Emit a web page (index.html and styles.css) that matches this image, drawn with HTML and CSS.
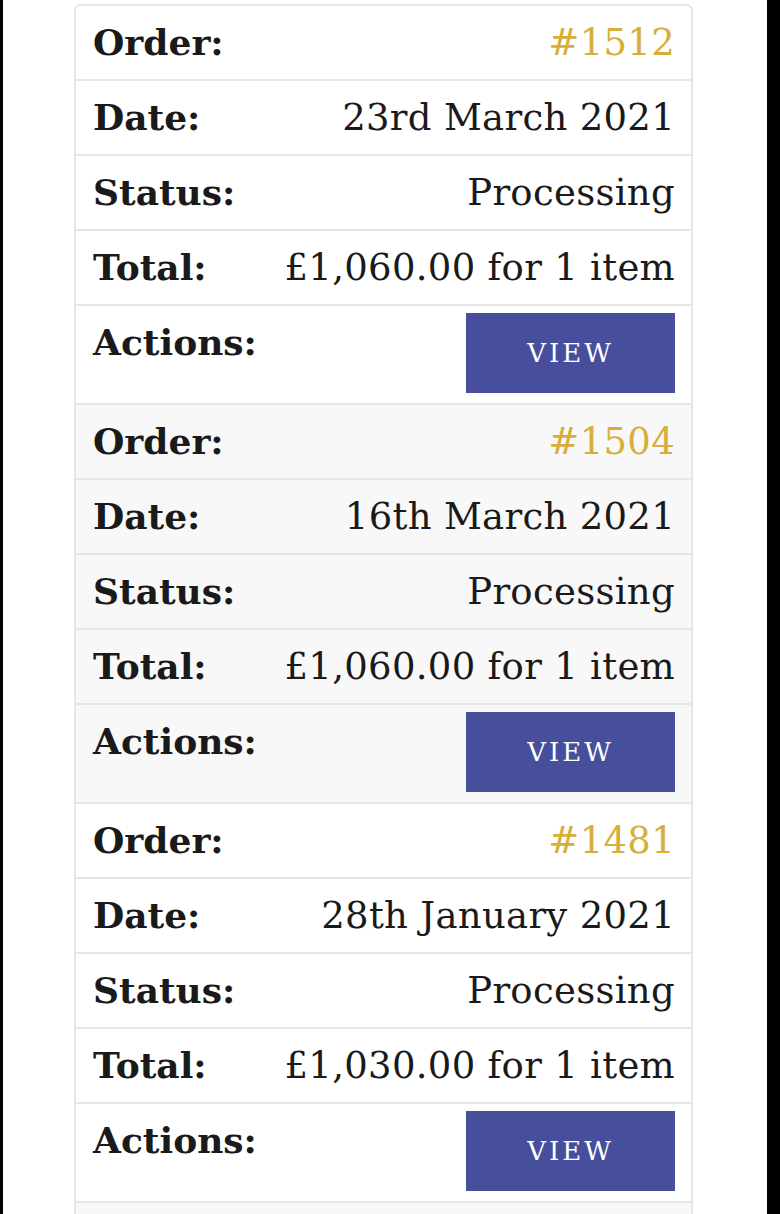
FILE: index.html
```html
<!DOCTYPE html>
<html>
<head>
<meta charset="utf-8">
<link rel="stylesheet" href="styles.css">
</head>
<body>
<div class="page">
  <div class="orders">
    <div class="order">
      <div class="row"><span class="label">Order:</span><span class="value num">#1512</span></div>
      <div class="row"><span class="label">Date:</span><span class="value">23rd March 2021</span></div>
      <div class="row"><span class="label">Status:</span><span class="value">Processing</span></div>
      <div class="row"><span class="label">Total:</span><span class="value">£1,060.00 for 1 item</span></div>
      <div class="row actions"><span class="label">Actions:</span><a class="btn">View</a></div>
    </div>
    <div class="order alt">
      <div class="row"><span class="label">Order:</span><span class="value num">#1504</span></div>
      <div class="row"><span class="label">Date:</span><span class="value">16th March 2021</span></div>
      <div class="row"><span class="label">Status:</span><span class="value">Processing</span></div>
      <div class="row"><span class="label">Total:</span><span class="value">£1,060.00 for 1 item</span></div>
      <div class="row actions"><span class="label">Actions:</span><a class="btn">View</a></div>
    </div>
    <div class="order">
      <div class="row"><span class="label">Order:</span><span class="value num">#1481</span></div>
      <div class="row"><span class="label">Date:</span><span class="value">28th January 2021</span></div>
      <div class="row"><span class="label">Status:</span><span class="value">Processing</span></div>
      <div class="row"><span class="label">Total:</span><span class="value">£1,030.00 for 1 item</span></div>
      <div class="row actions"><span class="label">Actions:</span><a class="btn">View</a></div>
    </div>
    <div class="order alt">
      <div class="row empty"></div>
    </div>
  </div>
</div>
</body>
</html>
```
FILE: styles.css
```css
html {
  background: #000;
}
body {
  margin: 0;
  padding: 0 13px 0 3px;
  font-family: "DejaVu Serif", "Liberation Serif", serif;
  color: #1a1a1a;
}
.page {
  background: #fff;
  height: 1214px;
  padding: 4px 74px 0 71px;
  box-sizing: border-box;
  overflow: hidden;
}
.orders {
  border: 2px solid #e6e6e6;
  border-bottom: none;
  border-radius: 7px 7px 0 0;
  overflow: hidden;
}
.order {
  background: #fff;
}
.order.alt {
  background: #f8f8f8;
}
.row {
  display: flex;
  justify-content: space-between;
  align-items: flex-start;
  padding: 7px 16px 7px 17px;
  height: 59px;
  line-height: 59px;
  font-size: 37px;
  border-bottom: 2px solid #e6e6e6;
}
.row.actions {
  height: 80px;
  padding-bottom: 10px;
}
.label {
  font-weight: bold;
  font-size: 36px;
}
.value {
  letter-spacing: 0.3px;
}
.value.num {
  color: #d7ae3a;
}
.btn {
  display: flex;
  align-items: center;
  justify-content: center;
  width: 209px;
  height: 80px;
  background: #474f9c;
  color: #fff;
  text-transform: uppercase;
  font-size: 26px;
  letter-spacing: 3px;
  line-height: 1;
}
```
